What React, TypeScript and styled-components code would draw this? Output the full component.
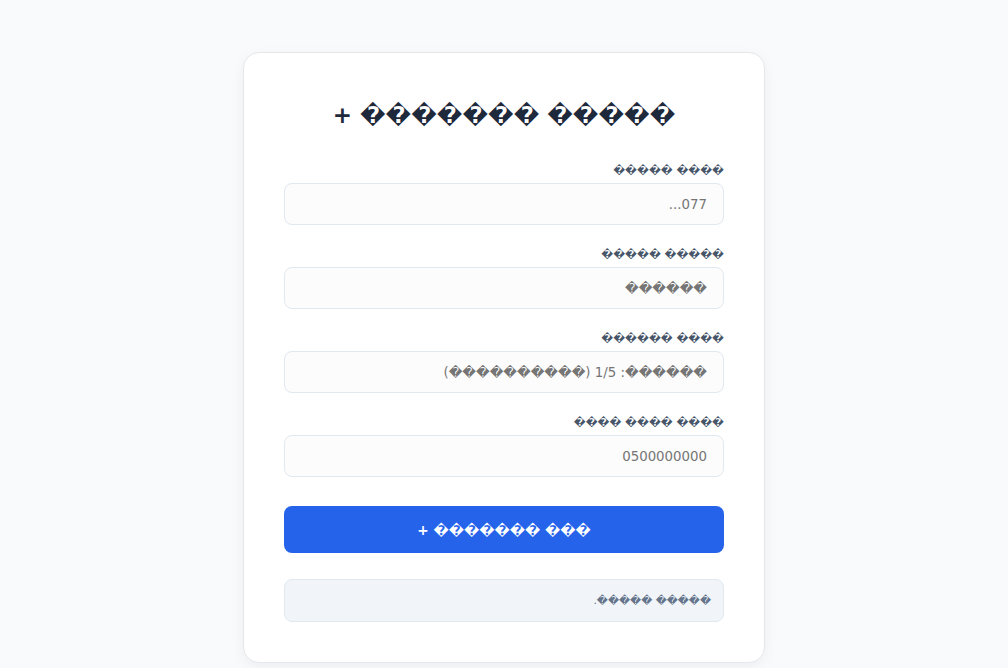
import React, { useState } from 'react';
import styled, { createGlobalStyle } from 'styled-components';

const GlobalStyle = createGlobalStyle`
  * {
    box-sizing: border-box;
  }
  body {
    margin: 0;
    background: #f8fafc;
    font-family: 'DejaVu Sans', 'Liberation Sans', sans-serif;
  }
`;

const Page = styled.div`
  display: flex;
  justify-content: center;
  padding: 52px 16px 40px;
`;

const Card = styled.form`
  width: 522px;
  background: #ffffff;
  border: 1px solid #e5e7eb;
  border-radius: 16px;
  box-shadow: 0 4px 14px rgba(15, 23, 42, 0.05);
  padding: 40px;
  direction: rtl;
  display: flex;
  flex-direction: column;
`;

const Title = styled.h1`
  margin: 7px 0 33px;
  font-size: 23px;
  line-height: 30px;
  font-weight: 700;
  color: #1e293b;
  text-align: center;
`;

const Field = styled.div`
  display: flex;
  flex-direction: column;
  margin-bottom: 22px;
`;

const Label = styled.label`
  font-size: 10.7px;
  line-height: 16px;
  font-weight: 700;
  color: #475569;
  margin-bottom: 4px;
`;

const Input = styled.input`
  height: 42px;
  width: 100%;
  border: 1px solid #e2e8f0;
  border-radius: 8px;
  background: #fcfcfc;
  padding: 0 16px;
  font-family: 'DejaVu Sans', sans-serif;
  font-size: 13.333px;
  color: #1e293b;
  direction: rtl;
  outline: none;
  &::placeholder {
    color: #757575;
  }
`;

const SubmitButton = styled.button`
  margin-top: 7px;
  height: 47px;
  border: none;
  border-radius: 8px;
  background: #2563eb;
  color: #ffffff;
  font-family: inherit;
  font-size: 13.7px;
  font-weight: 700;
  cursor: pointer;
`;

const Result = styled.div`
  margin-top: 26px;
  height: 43px;
  display: flex;
  align-items: center;
  padding: 0 12px;
  background: #f1f5f9;
  border: 1px solid #e2e8f0;
  border-radius: 8px;
  font-size: 10.8px;
  color: #64748b;
`;

const fields = [
  { name: 'id', label: '���� �����', placeholder: '077...' },
  { name: 'name', label: '����� �����', placeholder: '������' },
  { name: 'type', label: '���� ������', placeholder: '������: 1/5 (����������)' },
  { name: 'phone', label: '���� ���� ����', placeholder: '0500000000' },
];

const App = () => {
  const [values, setValues] = useState<any>({});

  return (
    <Page>
      <GlobalStyle />
      <Card onSubmit={(e) => e.preventDefault()}>
        <Title>����� ������� +</Title>
        {fields.map((f) => (
          <Field key={f.name}>
            <Label htmlFor={f.name}>{f.label}</Label>
            <Input
              id={f.name}
              placeholder={f.placeholder}
              value={values[f.name] || ''}
              onChange={(e) => setValues({ ...values, [f.name]: e.target.value })}
            />
          </Field>
        ))}
        <SubmitButton type="submit">��� ������� +</SubmitButton>
        <Result>����� �����.</Result>
      </Card>
    </Page>
  );
};

export default App;
